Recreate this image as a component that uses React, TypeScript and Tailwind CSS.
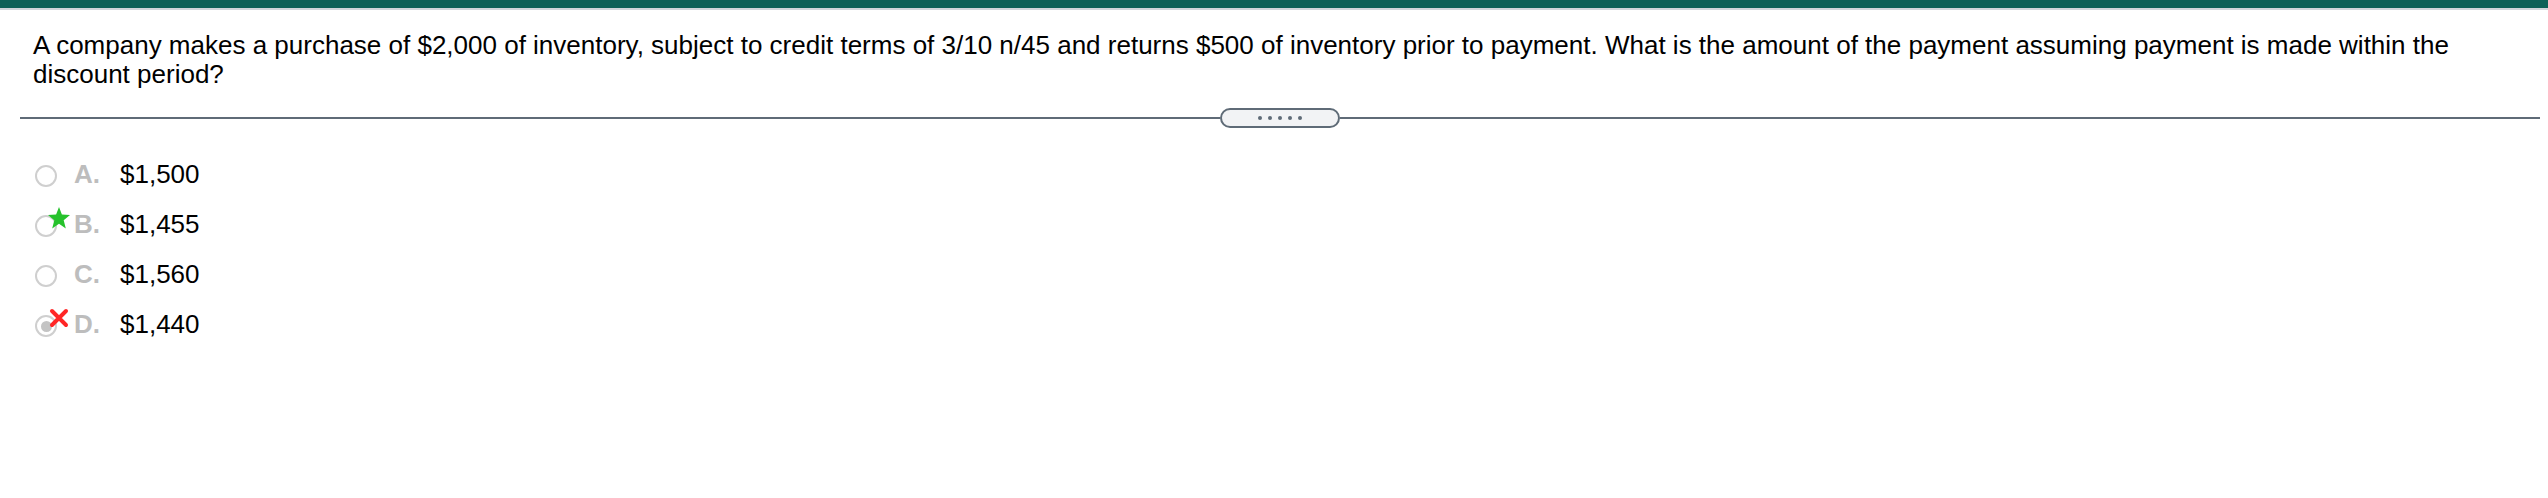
const options = [
  { letter: "A.", value: "$1,500", mark: null as null | "star" | "cross", checked: false },
  { letter: "B.", value: "$1,455", mark: "star" as const, checked: false },
  { letter: "C.", value: "$1,560", mark: null, checked: false },
  { letter: "D.", value: "$1,440", mark: "cross" as const, checked: true },
];

function Star() {
  return (
    <svg viewBox="0 0 24 24" className="absolute left-[10px] top-[-11px] h-[24px] w-[24px]">
      <polygon
        points="12,1 14.9,8.6 23,9 16.7,14.2 18.8,22.5 12,17.8 5.2,22.5 7.3,14.2 1,9 9.1,8.6"
        fill="#26c22c"
      />
    </svg>
  );
}

function Cross() {
  return (
    <svg viewBox="0 0 20 20" className="absolute left-[12px] top-[-9px] h-[20px] w-[20px]">
      <path d="M3 3 L17 17 M17 3 L3 17" stroke="#ff2626" strokeWidth="4" strokeLinecap="round" />
    </svg>
  );
}

export default function App() {
  return (
    <div className="min-h-[498px] w-full bg-white font-['Liberation_Sans',Arial,sans-serif] text-black">
      <div className="h-[8px] bg-[#0d6158]" />
      <div className="h-[2px] bg-[#d0d5da]" />

      <p className="pl-[33px] pr-[40px] pt-[21px] text-[26px] leading-[29px]">
        A company makes a purchase of $2,000 of inventory, subject to credit terms of 3/10 n/45 and returns $500 of
        inventory prior to payment. What is the amount of the payment assuming payment is made within the discount
        period?
      </p>

      <div className="ml-[20px] mr-[8px] mt-[19px] flex h-[20px] items-center">
        <div className="h-[2px] flex-1 bg-[#5f6b77]" />
        <div className="flex h-[20px] w-[120px] items-center justify-center gap-[6px] rounded-full border-2 border-[#5f6b77] bg-[#f2f3f5]">
          <span className="h-[4px] w-[4px] rounded-full bg-[#5f6b77]" />
          <span className="h-[4px] w-[4px] rounded-full bg-[#5f6b77]" />
          <span className="h-[4px] w-[4px] rounded-full bg-[#5f6b77]" />
          <span className="h-[4px] w-[4px] rounded-full bg-[#5f6b77]" />
          <span className="h-[4px] w-[4px] rounded-full bg-[#5f6b77]" />
        </div>
        <div className="h-[2px] flex-1 bg-[#5f6b77]" />
      </div>

      <div className="mt-[21px] flex flex-col pl-[35px]">
        {options.map((o) => (
          <div key={o.letter} className="flex h-[50px] items-center">
            <div className="relative mt-[4px] flex h-[22px] w-[22px] items-center justify-center rounded-full border-2 border-[#cfcfcf] bg-white">
              {o.checked && <span className="h-[11px] w-[11px] rounded-full bg-[#c4c4c4]" />}
              {o.mark === "star" && <Star />}
              {o.mark === "cross" && <Cross />}
            </div>
            <span className="ml-[17px] w-[46px] text-[26px] font-bold leading-[28px] text-[#bdbdbd]">{o.letter}</span>
            <span className="text-[26px] leading-[28px]">{o.value}</span>
          </div>
        ))}
      </div>
    </div>
  );
}
